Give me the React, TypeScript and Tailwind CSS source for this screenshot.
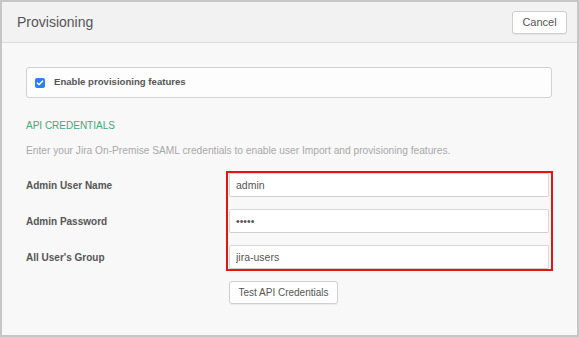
import { Check } from "lucide-react";

const font = { fontFamily: '"Liberation Sans", Arial, sans-serif' };

const fields = [
  { label: "Admin User Name", value: "admin", type: "text" },
  { label: "Admin Password", value: "admin", type: "password" },
  { label: "All User's Group", value: "jira-users", type: "text" },
];

export default function App() {
  return (
    <div
      style={font}
      className="flex h-[337px] w-[579px] flex-col border-2 border-[#c6c6c6] bg-[#f8f8f8] text-[#555]"
    >
      <div className="flex h-[41px] items-center justify-between border-b border-[#dcdcdc] bg-[#f2f2f2] pl-[15px] pr-[10px]">
        <h1 className="mt-[1px] text-[14px] text-[#555]">Provisioning</h1>
        <button className="mt-[1px] h-[23px] w-[55px] rounded-[3px] border border-[#cfcfcf] bg-white text-[11px] text-[#555] shadow-[0_1px_0_rgba(0,0,0,0.05)]">
          Cancel
        </button>
      </div>

      <div className="flex flex-col px-[24px]">
        <div className="mt-[24px] flex h-[31px] w-[526px] items-center gap-[9px] rounded-[3px] border border-[#d2d2d2] bg-[#fdfdfd] pl-[8px]">
          <span className="flex h-[10px] w-[10px] items-center justify-center rounded-[2px] bg-[#2d7ff2]">
            <Check className="h-[8px] w-[8px] text-white" strokeWidth={4} />
          </span>
          <span className="text-[9.6px] font-bold text-[#555]">Enable provisioning features</span>
        </div>

        <h2 className="mt-[20px] text-[10px] leading-[16px] text-[#47a67b]">API CREDENTIALS</h2>
        <p className="mt-[9px] text-[10.2px] leading-[15px] text-[#a8a8a8]">
          Enter your Jira On-Premise SAML credentials to enable user Import and provisioning features.
        </p>

        <div className="mt-[13px] flex">
          <div className="flex w-[205px] flex-col gap-3 pt-[2px]">
            {fields.map((f) => (
              <div key={f.label} className="flex h-[24px] items-center text-[10px] font-bold text-[#555]">
                {f.label}
              </div>
            ))}
          </div>
          <div className="flex flex-col">
            <div className="flex w-[327px] flex-col gap-3 border-2 border-[#e3150e] pl-px">
              {fields.map((f) => (
                <input
                  key={f.label}
                  readOnly
                  type={f.type}
                  defaultValue={f.value}
                  style={font}
                  className="h-[24px] w-[320px] rounded-[2px] border border-[#d9d9d9] border-b-[#cfcfcf] bg-white px-[6px] text-[10.5px] text-[#555] outline-none"
                />
              ))}
            </div>
            <button className="ml-[3px] mt-[10px] h-[23px] w-[109px] rounded-[3px] border border-[#cfcfcf] bg-white text-[10px] text-[#555] shadow-[0_1px_0_rgba(0,0,0,0.05)]">
              Test API Credentials
            </button>
          </div>
        </div>
      </div>
    </div>
  );
}
